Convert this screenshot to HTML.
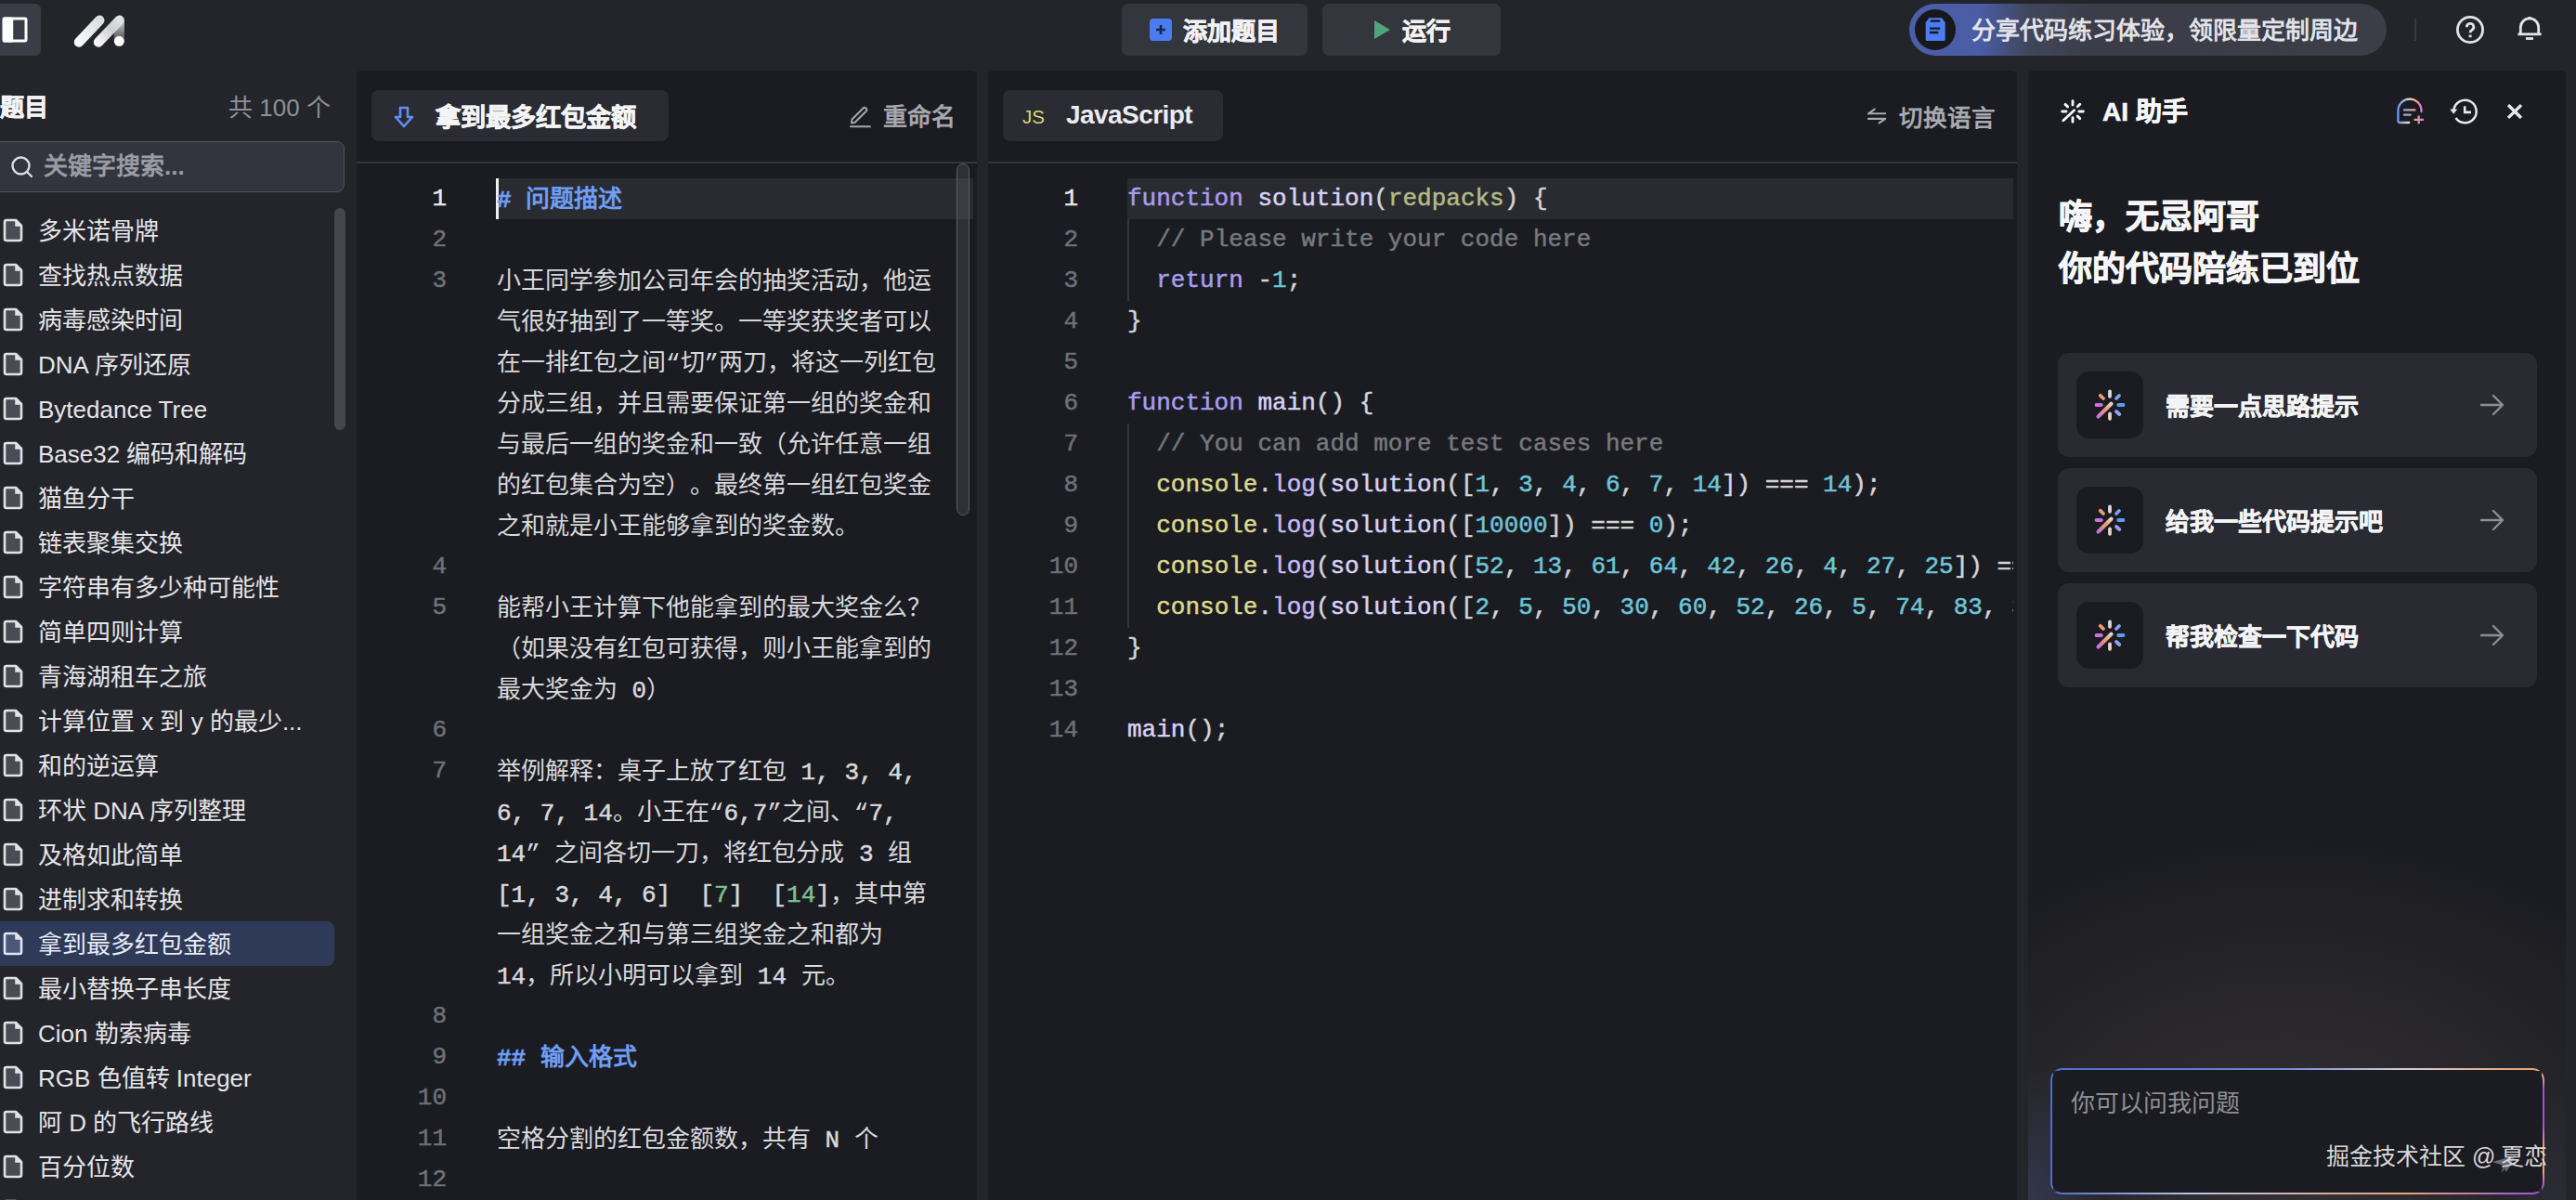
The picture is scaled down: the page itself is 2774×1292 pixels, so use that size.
<!DOCTYPE html>
<html lang="zh-CN"><head><meta charset="utf-8">
<style>
*{box-sizing:border-box;margin:0;padding:0}
html,body{width:2774px;height:1292px;overflow:hidden}
body{text-spacing-trim:space-all;background:#24252b;font-family:"Liberation Sans",sans-serif;color:#e6e6ea;position:relative}
.a{position:absolute;white-space:nowrap}
.b{font-weight:bold}.hv{-webkit-text-stroke:0.6px currentColor}.as{-webkit-text-stroke:0.5px currentColor}
/* top bar */
.tbtn{position:absolute;top:4px;height:56px;background:#34363e;border-radius:7px}
/* sidebar */
.item{position:absolute;left:0;width:360px;height:48px;font-size:26px;line-height:48px;color:#e4e4e8}
.item .ic{position:absolute;left:3px;top:11px;width:22px;height:26px}
.item span{position:absolute;left:41px;top:1px}
.item.sel .ic path{stroke:#dfe5f2}.item.sel .ic path:first-child{fill:#4b5678}.item.sel span{color:#e8ecf6}.item.sel{background:#2e3a58;border-radius:0 8px 8px 0}
/* panels */
.panel{position:absolute;top:76px;height:1240px;background:#1b1c21;border-radius:5px 5px 0 0;overflow:hidden}
.sep{position:absolute;left:0;right:0;top:98px;height:2px;background:#35363c}
.chip{position:absolute;top:21px;height:55px;background:#2b2c33;border-radius:8px}
.ln{position:absolute;text-align:right;font-family:"Liberation Mono",monospace;font-size:26px;line-height:44px;color:#6f7077;-webkit-text-stroke:0.5px currentColor}
.md{position:absolute;margin-top:2px;font-size:26px;line-height:44px;color:#d8d8dc;font-family:"Liberation Mono",monospace}
.code{position:absolute;font-family:"Liberation Mono",monospace;font-size:26px;line-height:44px;color:#d4d4d8;white-space:pre;-webkit-text-stroke:0.5px currentColor}
.kw{color:#a99cf0}.fn{color:#d8d2f8}.pa{color:#b3bb86}.cm{color:#77787e}.nu{color:#6ec5d8}.co{color:#dcd88e}.lg{color:#c6b9f6}.gr{color:#7fc08f}
.card{position:absolute;left:2216px;width:516px;height:112px;background:#2a2b32;border-radius:12px}
.card .ib{position:absolute;left:20px;top:20px;width:72px;height:72px;background:#1b1c21;border-radius:14px}
.card .t{position:absolute;left:116px;top:0;line-height:112px;font-size:26px;font-weight:bold;color:#f0f0f2}
.card .ar{position:absolute;left:455px;top:43px}
</style></head>
<body>

<!-- ===== TOP BAR ===== -->
<div class="a" style="left:0;top:4px;width:44px;height:56px;background:#3a3c46;border-radius:0 6px 6px 0"></div>
<svg class="a" style="left:0;top:0" width="44" height="60" viewBox="0 0 44 60"><rect x="4.2" y="19.9" width="23.8" height="24.1" rx="1.2" fill="none" stroke="#fff" stroke-width="3"/><rect x="2.7" y="18.4" width="11.5" height="27.1" rx="1.5" fill="#fff"/></svg>
<!-- logo -->
<svg class="a" style="left:78px;top:14.7px" width="60" height="38" viewBox="0 0 60 38">
<defs><linearGradient id="lg1" x1="0" y1="1" x2="1" y2="0"><stop offset="0" stop-color="#f8f8f8"/><stop offset="1" stop-color="#dedede"/></linearGradient>
<linearGradient id="lg2" x1="0" y1="1" x2="1" y2="0"><stop offset="0" stop-color="#f4f4f4"/><stop offset="0.6" stop-color="#cfcfcf"/><stop offset="1" stop-color="#e0e0e0"/></linearGradient>
<linearGradient id="lg3" x1="0" y1="0" x2="0" y2="1"><stop offset="0" stop-color="#cfcfcf"/><stop offset="1" stop-color="#4a4a4e"/></linearGradient></defs>
<path d="M55.85 6.8V29.3H44.8V19z" fill="url(#lg3)"/>
<line x1="7" y1="30.4" x2="29.2" y2="6.8" stroke="url(#lg1)" stroke-width="10.6" stroke-linecap="round"/>
<line x1="28.1" y1="30.4" x2="50.6" y2="6.8" stroke="url(#lg2)" stroke-width="10.6" stroke-linecap="round"/>
<circle cx="50.3" cy="29.3" r="5.5" fill="#fff"/>
</svg>

<div class="tbtn" style="left:1208px;width:200px"></div>
<svg class="a" style="left:1238px;top:20px" width="24" height="24" viewBox="0 0 24 24"><rect x="0" y="0" width="24" height="24" rx="4" fill="#4a7cf0"/><path d="M12 7v10M7 12h10" stroke="#15254f" stroke-width="2.6"/></svg>
<div class="a b hv" style="left:1274px;top:6px;line-height:56px;font-size:26px;color:#f2f2f4">添加题目</div>
<div class="tbtn" style="left:1424px;width:192px"></div>
<svg class="a" style="left:1480px;top:22px" width="17" height="20" viewBox="0 0 17 20"><path d="M0 0L17 10L0 20Z" fill="#4fa47e"/></svg>
<div class="a b hv" style="left:1510px;top:6px;line-height:56px;font-size:26px;color:#f2f2f4">运行</div>

<div class="a" style="left:2056px;top:4px;width:514px;height:56px;border-radius:28px;background:linear-gradient(90deg,#4b5ea8 0%,#4a5ca3 15%,#40465c 25%,#3b3d48 38%,#3b3d47 100%)"></div>
<div class="a" style="left:2062px;top:10px;width:44px;height:44px;border-radius:22px;background:#17181c"></div>
<svg class="a" style="left:2066px;top:14px" width="36" height="36" viewBox="2066 14 36 36"><path d="M2073.7 42.4V24.2L2077.4 19.2H2091L2094.7 24.2V42.4a1.5 1.5 0 0 1-1.5 1.5H2075.2a1.5 1.5 0 0 1-1.5-1.5z" fill="#4a7cf2"/><path d="M2078.8 22.6H2089.2M2078 30.6H2089.2M2078 35H2087.4" stroke="#17181c" stroke-width="2.3"/></svg>
<div class="a" style="left:2123px;top:5px;line-height:56px;font-size:26px;color:#e2e2e8;font-weight:bold">分享代码练习体验，领限量定制周边</div>
<div class="a" style="left:2600px;top:20px;width:2px;height:24px;background:#3a3b42"></div>
<svg class="a" style="left:2644px;top:16px" width="32" height="32" viewBox="0 0 32 32"><circle cx="16" cy="16" r="13.6" fill="none" stroke="#e4e4e8" stroke-width="2.8"/><path d="M12.4 13.2a3.7 3.7 0 1 1 5.6 3.1c-1.2.7-1.9 1.5-1.9 3" fill="none" stroke="#e4e4e8" stroke-width="2.8" stroke-linecap="butt"/><rect x="14.6" y="21.6" width="3" height="2.6" fill="#e4e4e8"/></svg>
<svg class="a" style="left:2709px;top:15px" width="30" height="32" viewBox="0 0 30 32"><path d="M5.3 21V14.5a9.7 9.7 0 0 1 19.4 0V21" fill="none" stroke="#e4e4e8" stroke-width="2.8"/><path d="M2.4 21.8h25.2" stroke="#e4e4e8" stroke-width="2.8"/><path d="M11 26.5h8" stroke="#e4e4e8" stroke-width="2.8"/><rect x="13.3" y="3" width="3.4" height="2.5" fill="#e4e4e8"/></svg>

<!-- ===== SIDEBAR ===== -->
<div class="a b hv" style="left:0;top:94px;line-height:44px;font-size:26px;color:#f4f4f6">题目</div>
<div class="a" style="left:246px;top:94px;line-height:44px;font-size:26px;color:#8e9099">共 100 个</div>
<div class="a" style="left:-10px;top:152px;width:381px;height:55px;background:#32353d;border:1.5px solid #52555e;border-radius:8px"></div>
<svg class="a" style="left:12px;top:168px" width="24" height="24" viewBox="0 0 24 24"><circle cx="10.5" cy="10.5" r="9" fill="none" stroke="#dcdce0" stroke-width="2.4"/><path d="M17.5 17.5L22 22" stroke="#dcdce0" stroke-width="2.4" stroke-linecap="round"/></svg>
<div class="a b" style="left:47px;top:152px;line-height:55px;font-size:26px;color:#9a9ca5">关键字搜索...</div>
<div class="a" style="left:360px;top:224px;width:12px;height:239px;background:#46474c;border-radius:6px"></div>

<div id="list">
<div class="item" style="top:224px"><svg class="ic" viewBox="0 0 22 26"><path d="M4 2h10l6 6v14a2 2 0 0 1-2 2H4a2 2 0 0 1-2-2V4a2 2 0 0 1 2-2z" fill="#4a4b55" stroke="#e2e2e6" stroke-width="2.6" stroke-linejoin="round"/><path d="M14 2v6h6" fill="#e2e2e6" stroke="#e2e2e6" stroke-width="1.5"/></svg><span>多米诺骨牌</span></div>
<div class="item" style="top:272px"><svg class="ic" viewBox="0 0 22 26"><path d="M4 2h10l6 6v14a2 2 0 0 1-2 2H4a2 2 0 0 1-2-2V4a2 2 0 0 1 2-2z" fill="#4a4b55" stroke="#e2e2e6" stroke-width="2.6" stroke-linejoin="round"/><path d="M14 2v6h6" fill="#e2e2e6" stroke="#e2e2e6" stroke-width="1.5"/></svg><span>查找热点数据</span></div>
<div class="item" style="top:320px"><svg class="ic" viewBox="0 0 22 26"><path d="M4 2h10l6 6v14a2 2 0 0 1-2 2H4a2 2 0 0 1-2-2V4a2 2 0 0 1 2-2z" fill="#4a4b55" stroke="#e2e2e6" stroke-width="2.6" stroke-linejoin="round"/><path d="M14 2v6h6" fill="#e2e2e6" stroke="#e2e2e6" stroke-width="1.5"/></svg><span>病毒感染时间</span></div>
<div class="item" style="top:368px"><svg class="ic" viewBox="0 0 22 26"><path d="M4 2h10l6 6v14a2 2 0 0 1-2 2H4a2 2 0 0 1-2-2V4a2 2 0 0 1 2-2z" fill="#4a4b55" stroke="#e2e2e6" stroke-width="2.6" stroke-linejoin="round"/><path d="M14 2v6h6" fill="#e2e2e6" stroke="#e2e2e6" stroke-width="1.5"/></svg><span>DNA 序列还原</span></div>
<div class="item" style="top:416px"><svg class="ic" viewBox="0 0 22 26"><path d="M4 2h10l6 6v14a2 2 0 0 1-2 2H4a2 2 0 0 1-2-2V4a2 2 0 0 1 2-2z" fill="#4a4b55" stroke="#e2e2e6" stroke-width="2.6" stroke-linejoin="round"/><path d="M14 2v6h6" fill="#e2e2e6" stroke="#e2e2e6" stroke-width="1.5"/></svg><span>Bytedance Tree</span></div>
<div class="item" style="top:464px"><svg class="ic" viewBox="0 0 22 26"><path d="M4 2h10l6 6v14a2 2 0 0 1-2 2H4a2 2 0 0 1-2-2V4a2 2 0 0 1 2-2z" fill="#4a4b55" stroke="#e2e2e6" stroke-width="2.6" stroke-linejoin="round"/><path d="M14 2v6h6" fill="#e2e2e6" stroke="#e2e2e6" stroke-width="1.5"/></svg><span>Base32 编码和解码</span></div>
<div class="item" style="top:512px"><svg class="ic" viewBox="0 0 22 26"><path d="M4 2h10l6 6v14a2 2 0 0 1-2 2H4a2 2 0 0 1-2-2V4a2 2 0 0 1 2-2z" fill="#4a4b55" stroke="#e2e2e6" stroke-width="2.6" stroke-linejoin="round"/><path d="M14 2v6h6" fill="#e2e2e6" stroke="#e2e2e6" stroke-width="1.5"/></svg><span>猫鱼分干</span></div>
<div class="item" style="top:560px"><svg class="ic" viewBox="0 0 22 26"><path d="M4 2h10l6 6v14a2 2 0 0 1-2 2H4a2 2 0 0 1-2-2V4a2 2 0 0 1 2-2z" fill="#4a4b55" stroke="#e2e2e6" stroke-width="2.6" stroke-linejoin="round"/><path d="M14 2v6h6" fill="#e2e2e6" stroke="#e2e2e6" stroke-width="1.5"/></svg><span>链表聚集交换</span></div>
<div class="item" style="top:608px"><svg class="ic" viewBox="0 0 22 26"><path d="M4 2h10l6 6v14a2 2 0 0 1-2 2H4a2 2 0 0 1-2-2V4a2 2 0 0 1 2-2z" fill="#4a4b55" stroke="#e2e2e6" stroke-width="2.6" stroke-linejoin="round"/><path d="M14 2v6h6" fill="#e2e2e6" stroke="#e2e2e6" stroke-width="1.5"/></svg><span>字符串有多少种可能性</span></div>
<div class="item" style="top:656px"><svg class="ic" viewBox="0 0 22 26"><path d="M4 2h10l6 6v14a2 2 0 0 1-2 2H4a2 2 0 0 1-2-2V4a2 2 0 0 1 2-2z" fill="#4a4b55" stroke="#e2e2e6" stroke-width="2.6" stroke-linejoin="round"/><path d="M14 2v6h6" fill="#e2e2e6" stroke="#e2e2e6" stroke-width="1.5"/></svg><span>简单四则计算</span></div>
<div class="item" style="top:704px"><svg class="ic" viewBox="0 0 22 26"><path d="M4 2h10l6 6v14a2 2 0 0 1-2 2H4a2 2 0 0 1-2-2V4a2 2 0 0 1 2-2z" fill="#4a4b55" stroke="#e2e2e6" stroke-width="2.6" stroke-linejoin="round"/><path d="M14 2v6h6" fill="#e2e2e6" stroke="#e2e2e6" stroke-width="1.5"/></svg><span>青海湖租车之旅</span></div>
<div class="item" style="top:752px"><svg class="ic" viewBox="0 0 22 26"><path d="M4 2h10l6 6v14a2 2 0 0 1-2 2H4a2 2 0 0 1-2-2V4a2 2 0 0 1 2-2z" fill="#4a4b55" stroke="#e2e2e6" stroke-width="2.6" stroke-linejoin="round"/><path d="M14 2v6h6" fill="#e2e2e6" stroke="#e2e2e6" stroke-width="1.5"/></svg><span>计算位置 x 到 y 的最少...</span></div>
<div class="item" style="top:800px"><svg class="ic" viewBox="0 0 22 26"><path d="M4 2h10l6 6v14a2 2 0 0 1-2 2H4a2 2 0 0 1-2-2V4a2 2 0 0 1 2-2z" fill="#4a4b55" stroke="#e2e2e6" stroke-width="2.6" stroke-linejoin="round"/><path d="M14 2v6h6" fill="#e2e2e6" stroke="#e2e2e6" stroke-width="1.5"/></svg><span>和的逆运算</span></div>
<div class="item" style="top:848px"><svg class="ic" viewBox="0 0 22 26"><path d="M4 2h10l6 6v14a2 2 0 0 1-2 2H4a2 2 0 0 1-2-2V4a2 2 0 0 1 2-2z" fill="#4a4b55" stroke="#e2e2e6" stroke-width="2.6" stroke-linejoin="round"/><path d="M14 2v6h6" fill="#e2e2e6" stroke="#e2e2e6" stroke-width="1.5"/></svg><span>环状 DNA 序列整理</span></div>
<div class="item" style="top:896px"><svg class="ic" viewBox="0 0 22 26"><path d="M4 2h10l6 6v14a2 2 0 0 1-2 2H4a2 2 0 0 1-2-2V4a2 2 0 0 1 2-2z" fill="#4a4b55" stroke="#e2e2e6" stroke-width="2.6" stroke-linejoin="round"/><path d="M14 2v6h6" fill="#e2e2e6" stroke="#e2e2e6" stroke-width="1.5"/></svg><span>及格如此简单</span></div>
<div class="item" style="top:944px"><svg class="ic" viewBox="0 0 22 26"><path d="M4 2h10l6 6v14a2 2 0 0 1-2 2H4a2 2 0 0 1-2-2V4a2 2 0 0 1 2-2z" fill="#4a4b55" stroke="#e2e2e6" stroke-width="2.6" stroke-linejoin="round"/><path d="M14 2v6h6" fill="#e2e2e6" stroke="#e2e2e6" stroke-width="1.5"/></svg><span>进制求和转换</span></div>
<div class="item sel" style="top:992px"><svg class="ic" viewBox="0 0 22 26"><path d="M4 2h10l6 6v14a2 2 0 0 1-2 2H4a2 2 0 0 1-2-2V4a2 2 0 0 1 2-2z" fill="#4a4b55" stroke="#e2e2e6" stroke-width="2.6" stroke-linejoin="round"/><path d="M14 2v6h6" fill="#e2e2e6" stroke="#e2e2e6" stroke-width="1.5"/></svg><span>拿到最多红包金额</span></div>
<div class="item" style="top:1040px"><svg class="ic" viewBox="0 0 22 26"><path d="M4 2h10l6 6v14a2 2 0 0 1-2 2H4a2 2 0 0 1-2-2V4a2 2 0 0 1 2-2z" fill="#4a4b55" stroke="#e2e2e6" stroke-width="2.6" stroke-linejoin="round"/><path d="M14 2v6h6" fill="#e2e2e6" stroke="#e2e2e6" stroke-width="1.5"/></svg><span>最小替换子串长度</span></div>
<div class="item" style="top:1088px"><svg class="ic" viewBox="0 0 22 26"><path d="M4 2h10l6 6v14a2 2 0 0 1-2 2H4a2 2 0 0 1-2-2V4a2 2 0 0 1 2-2z" fill="#4a4b55" stroke="#e2e2e6" stroke-width="2.6" stroke-linejoin="round"/><path d="M14 2v6h6" fill="#e2e2e6" stroke="#e2e2e6" stroke-width="1.5"/></svg><span>Cion 勒索病毒</span></div>
<div class="item" style="top:1136px"><svg class="ic" viewBox="0 0 22 26"><path d="M4 2h10l6 6v14a2 2 0 0 1-2 2H4a2 2 0 0 1-2-2V4a2 2 0 0 1 2-2z" fill="#4a4b55" stroke="#e2e2e6" stroke-width="2.6" stroke-linejoin="round"/><path d="M14 2v6h6" fill="#e2e2e6" stroke="#e2e2e6" stroke-width="1.5"/></svg><span>RGB 色值转 Integer</span></div>
<div class="item" style="top:1184px"><svg class="ic" viewBox="0 0 22 26"><path d="M4 2h10l6 6v14a2 2 0 0 1-2 2H4a2 2 0 0 1-2-2V4a2 2 0 0 1 2-2z" fill="#4a4b55" stroke="#e2e2e6" stroke-width="2.6" stroke-linejoin="round"/><path d="M14 2v6h6" fill="#e2e2e6" stroke="#e2e2e6" stroke-width="1.5"/></svg><span>阿 D 的飞行路线</span></div>
<div class="item" style="top:1232px"><svg class="ic" viewBox="0 0 22 26"><path d="M4 2h10l6 6v14a2 2 0 0 1-2 2H4a2 2 0 0 1-2-2V4a2 2 0 0 1 2-2z" fill="#4a4b55" stroke="#e2e2e6" stroke-width="2.6" stroke-linejoin="round"/><path d="M14 2v6h6" fill="#e2e2e6" stroke="#e2e2e6" stroke-width="1.5"/></svg><span>百分位数</span></div>
<div class="item" style="top:1280px"><svg class="ic" viewBox="0 0 22 26"><path d="M4 2h10l6 6v14a2 2 0 0 1-2 2H4a2 2 0 0 1-2-2V4a2 2 0 0 1 2-2z" fill="#4a4b55" stroke="#e2e2e6" stroke-width="2.6" stroke-linejoin="round"/><path d="M14 2v6h6" fill="#e2e2e6" stroke="#e2e2e6" stroke-width="1.5"/></svg></div>
</div>

<!-- ===== PANEL 1: problem ===== -->
<div class="panel" style="left:384px;width:668px" id="p1">
<div class="chip" style="left:16px;width:320px"></div>
<svg class="a" style="left:40px;top:38px" width="22" height="24" viewBox="0 0 22 24"><path d="M7 2h8v10h5L11 22 2 12h5z" fill="none" stroke="#5f8ff0" stroke-width="2.6" stroke-linejoin="round"/></svg>
<div class="a b hv" style="left:85px;top:23px;line-height:55px;font-size:27.3px;color:#f4f4f6">拿到最多红包金额</div>
<svg class="a" style="left:530px;top:37px" width="26" height="25" viewBox="0 0 26 25"><path d="M3 19.5L3.5 15.5L15.5 3.5a2.2 2.2 0 0 1 3 0l0.2 0.2a2.2 2.2 0 0 1 0 3L6.7 18.8z" fill="none" stroke="#a6a7ad" stroke-width="2" stroke-linejoin="round"/><path d="M2 23.2h21" stroke="#a6a7ad" stroke-width="2" stroke-linecap="round"/></svg>
<div class="a b" style="left:567px;top:23px;line-height:55px;font-size:26px;color:#a6a7ad">重命名</div>
<div class="sep"></div>
<div class="a" style="left:150px;top:116px;width:514px;height:44px;background:#2a2b31"></div>
<div class="a" style="left:150px;top:116px;width:3px;height:44px;background:#f0f0f0"></div>
<div class="a" style="left:646px;top:100px;width:14px;height:379px;background:rgba(120,120,130,0.22);border:1.6px solid #5c5d63;border-radius:7px"></div>
<div class="ln" style="left:37px;width:60px;top:116px;color:#e8e8ec">1</div>
<div class="ln" style="left:37px;width:60px;top:160px;color:#6f7077">2</div>
<div class="ln" style="left:37px;width:60px;top:204px;color:#6f7077">3</div>
<div class="ln" style="left:37px;width:60px;top:512px;color:#6f7077">4</div>
<div class="ln" style="left:37px;width:60px;top:556px;color:#6f7077">5</div>
<div class="ln" style="left:37px;width:60px;top:688px;color:#6f7077">6</div>
<div class="ln" style="left:37px;width:60px;top:732px;color:#6f7077">7</div>
<div class="ln" style="left:37px;width:60px;top:996px;color:#6f7077">8</div>
<div class="ln" style="left:37px;width:60px;top:1040px;color:#6f7077">9</div>
<div class="ln" style="left:37px;width:60px;top:1084px;color:#6f7077">10</div>
<div class="ln" style="left:37px;width:60px;top:1128px;color:#6f7077">11</div>
<div class="ln" style="left:37px;width:60px;top:1172px;color:#6f7077">12</div>
<div class="ln" style="left:37px;width:60px;top:1216px;color:#6f7077">13</div>
<div class="md" style="left:151px;top:116px;white-space:pre"><span style="color:#6e9ef5;font-weight:bold"><span class="as">#</span> 问题描述</span></div>
<div class="md" style="left:151px;top:204px;white-space:pre">小王同学参加公司年会的抽奖活动，他运</div>
<div class="md" style="left:151px;top:248px;white-space:pre">气很好抽到了一等奖。一等奖获奖者可以</div>
<div class="md" style="left:151px;top:292px;white-space:pre">在一排红包之间“切”两刀，将这一列红包</div>
<div class="md" style="left:151px;top:336px;white-space:pre">分成三组，并且需要保证第一组的奖金和</div>
<div class="md" style="left:151px;top:380px;white-space:pre">与最后一组的奖金和一致（允许任意一组</div>
<div class="md" style="left:151px;top:424px;white-space:pre">的红包集合为空）。最终第一组红包奖金</div>
<div class="md" style="left:151px;top:468px;white-space:pre">之和就是小王能够拿到的奖金数。</div>
<div class="md" style="left:151px;top:556px;white-space:pre">能帮小王计算下他能拿到的最大奖金么？</div>
<div class="md" style="left:151px;top:600px;white-space:pre">（如果没有红包可获得，则小王能拿到的</div>
<div class="md" style="left:151px;top:644px;white-space:pre">最大奖金为 <span class="as">0</span>）</div>
<div class="md" style="left:151px;top:732px;white-space:pre">举例解释：桌子上放了红包 <span class="as">1, 3, 4,</span></div>
<div class="md" style="left:151px;top:776px;white-space:pre"><span class="as">6, 7, 14</span>。小王在“<span class="as">6,7</span>”之间、“<span class="as">7,</span></div>
<div class="md" style="left:151px;top:820px;white-space:pre"><span class="as">14</span>” 之间各切一刀，将红包分成 <span class="as">3</span> 组</div>
<div class="md" style="left:151px;top:864px;white-space:pre"><span class="as">[1, 3, 4, 6]  [</span><span class="gr"><span class="as">7</span></span><span class="as">]  [</span><span class="gr"><span class="as">14</span></span><span class="as">]</span>，其中第</div>
<div class="md" style="left:151px;top:908px;white-space:pre">一组奖金之和与第三组奖金之和都为</div>
<div class="md" style="left:151px;top:952px;white-space:pre"><span class="as">14</span>，所以小明可以拿到 <span class="as">14</span> 元。</div>
<div class="md" style="left:151px;top:1040px;white-space:pre"><span style="color:#6e9ef5;font-weight:bold"><span class="as">##</span> 输入格式</span></div>
<div class="md" style="left:151px;top:1128px;white-space:pre">空格分割的红包金额数，共有 <span class="as">N</span> 个</div>
</div>

<!-- ===== PANEL 2: code ===== -->
<div class="panel" style="left:1064px;width:1108px" id="p2">
<div class="chip" style="left:16px;width:237px"></div>
<div class="a" style="left:37px;top:22px;line-height:55px;font-size:20.5px;color:#d6d66e">JS</div>
<div class="a b" style="left:84px;top:20px;line-height:55px;font-size:28px;letter-spacing:-0.55px;color:#ececf0">JavaScript</div>
<svg class="a" style="left:940px;top:36px" width="34" height="26" viewBox="940 36 34 26"><path d="M948 46.3H966.2M948 46.3L954.7 41.7M948 51.9H966.2M966.2 51.9L959.6 56.4" fill="none" stroke="#a8aab2" stroke-width="2.1" stroke-linecap="round" stroke-linejoin="round"/></svg>
<div class="a b" style="left:981px;top:23.5px;line-height:55px;font-size:25.5px;color:#a8aab2">切换语言</div>
<div class="sep"></div>
<div class="a" style="left:150px;top:116px;width:954px;height:44px;background:#2a2b31"></div>
<div class="a" style="left:150px;top:160px;width:1.5px;height:88px;background:#35363c"></div>
<div class="a" style="left:150px;top:380px;width:1.5px;height:220px;background:#35363c"></div>
<div class="ln" style="left:37px;width:60px;top:116px;color:#e8e8ec">1</div>
<div class="ln" style="left:37px;width:60px;top:160px;color:#6f7077">2</div>
<div class="ln" style="left:37px;width:60px;top:204px;color:#6f7077">3</div>
<div class="ln" style="left:37px;width:60px;top:248px;color:#6f7077">4</div>
<div class="ln" style="left:37px;width:60px;top:292px;color:#6f7077">5</div>
<div class="ln" style="left:37px;width:60px;top:336px;color:#6f7077">6</div>
<div class="ln" style="left:37px;width:60px;top:380px;color:#6f7077">7</div>
<div class="ln" style="left:37px;width:60px;top:424px;color:#6f7077">8</div>
<div class="ln" style="left:37px;width:60px;top:468px;color:#6f7077">9</div>
<div class="ln" style="left:37px;width:60px;top:512px;color:#6f7077">10</div>
<div class="ln" style="left:37px;width:60px;top:556px;color:#6f7077">11</div>
<div class="ln" style="left:37px;width:60px;top:600px;color:#6f7077">12</div>
<div class="ln" style="left:37px;width:60px;top:644px;color:#6f7077">13</div>
<div class="ln" style="left:37px;width:60px;top:688px;color:#6f7077">14</div>
<div class="a" style="left:150px;top:0;width:954px;height:1240px;overflow:hidden"><div class="code" style="left:0;top:116px"><span class="kw">function</span> <span class="fn">solution</span>(<span class="pa">redpacks</span>) {</div>
<div class="code" style="left:0;top:160px">  <span class="cm">// Please write your code here</span></div>
<div class="code" style="left:0;top:204px">  <span class="kw">return</span> -<span class="nu">1</span>;</div>
<div class="code" style="left:0;top:248px">}</div>
<div class="code" style="left:0;top:292px"></div>
<div class="code" style="left:0;top:336px"><span class="kw">function</span> <span class="fn">main</span>() {</div>
<div class="code" style="left:0;top:380px">  <span class="cm">// You can add more test cases here</span></div>
<div class="code" style="left:0;top:424px">  <span class="co">console</span>.<span class="lg">log</span>(<span class="fn">solution</span>([<span class="nu">1</span>, <span class="nu">3</span>, <span class="nu">4</span>, <span class="nu">6</span>, <span class="nu">7</span>, <span class="nu">14</span>]) === <span class="nu">14</span>);</div>
<div class="code" style="left:0;top:468px">  <span class="co">console</span>.<span class="lg">log</span>(<span class="fn">solution</span>([<span class="nu">10000</span>]) === <span class="nu">0</span>);</div>
<div class="code" style="left:0;top:512px">  <span class="co">console</span>.<span class="lg">log</span>(<span class="fn">solution</span>([<span class="nu">52</span>, <span class="nu">13</span>, <span class="nu">61</span>, <span class="nu">64</span>, <span class="nu">42</span>, <span class="nu">26</span>, <span class="nu">4</span>, <span class="nu">27</span>, <span class="nu">25</span>]) === <span class="nu">33</span>);</div>
<div class="code" style="left:0;top:556px">  <span class="co">console</span>.<span class="lg">log</span>(<span class="fn">solution</span>([<span class="nu">2</span>, <span class="nu">5</span>, <span class="nu">50</span>, <span class="nu">30</span>, <span class="nu">60</span>, <span class="nu">52</span>, <span class="nu">26</span>, <span class="nu">5</span>, <span class="nu">74</span>, <span class="nu">83</span>, <span class="nu">34</span>, <span class="nu">96</span>, <span class="nu">6</span>, <span class="nu">88</span>, <span class="nu">94</span>, <span class="nu">80</span>, <span class="nu">64</span>, <span class="nu">22</span>]) === <span class="nu">2627</span>);</div>
<div class="code" style="left:0;top:600px">}</div>
<div class="code" style="left:0;top:644px"></div>
<div class="code" style="left:0;top:688px"><span class="fn">main</span>();</div></div>
</div>

<!-- ===== PANEL 3: AI ===== -->
<div class="panel" style="left:2184px;width:579px" id="p3">
<div class="a" style="left:0;top:600px;width:579px;height:640px;background:radial-gradient(ellipse 85% 55% at 48% 90%, rgba(62,56,60,0.75), rgba(62,56,60,0) 100%)"></div>
<div class="a" style="left:0;top:900px;width:579px;height:340px;background:radial-gradient(ellipse 14% 50% at 0% 100%, rgba(62,75,110,0.55), rgba(62,75,110,0) 100%)"></div>
<div class="a" style="left:0;top:900px;width:579px;height:340px;background:radial-gradient(ellipse 12% 45% at 100% 100%, rgba(60,62,80,0.35), rgba(60,62,80,0) 100%)"></div>
<svg class="a" style="left:33px;top:29px" width="30" height="30" viewBox="-15 -15 30 30"><g stroke="#f6f6f8" stroke-width="2.9" stroke-linecap="round" fill="none">
<path d="M0 -11.3V-7M0 6.6V11.3M-11.3 0H-7M6.8 0H11.3M-8 -7.6L-5.4 -5.1M5.2 -5.2L7.8 -7.7M5.2 5.1L7.8 7.6M-10.1 9.8L1.6 -1.2"/></g></svg>
<div class="a b hv" style="left:80px;top:23px;line-height:44px;font-size:28px;color:#f8f8fa">AI 助手</div>
<svg class="a" style="left:392px;top:24px" width="40" height="38" viewBox="2576 100 40 38"><defs>
<linearGradient id="ncg" gradientUnits="userSpaceOnUse" x1="2582" y1="0" x2="2608" y2="0"><stop offset="0" stop-color="#6f90f2"/><stop offset="0.5" stop-color="#eee0d6"/><stop offset="0.75" stop-color="#f0a67a"/><stop offset="1" stop-color="#d67ae6"/></linearGradient>
<linearGradient id="ncl" gradientUnits="userSpaceOnUse" x1="2589" y1="0" x2="2601" y2="0"><stop offset="0" stop-color="#8fa8f0"/><stop offset="1" stop-color="#f0a67a"/></linearGradient>
<linearGradient id="ncp" gradientUnits="userSpaceOnUse" x1="2599" y1="0" x2="2610" y2="0"><stop offset="0" stop-color="#f0a67a"/><stop offset="1" stop-color="#d07ae8"/></linearGradient></defs>
<path d="M2594.2 132H2584.4a2 2 0 0 1-2-2V119.1A12.55 12.55 0 0 1 2607.5 119.1v1.1" fill="none" stroke="url(#ncg)" stroke-width="2.3" stroke-linecap="round"/>
<path d="M2589 118.4H2600.5M2589 123.65H2595.6" stroke="url(#ncl)" stroke-width="2.3" stroke-linecap="round"/>
<path d="M2599.5 128.9H2610M2604.7 124.5V133.2" stroke="url(#ncp)" stroke-width="2.3" stroke-linecap="butt"/></svg>
<svg class="a" style="left:448px;top:24px" width="40" height="40" viewBox="2632 100 40 40">
<path d="M2642.5 117.9A12.2 12.2 0 1 1 2644.5 127" fill="none" stroke="#e8e8ec" stroke-width="2.5" stroke-linecap="butt"/>
<path d="M2638.2 117.6H2646.2L2642.2 122.8z" fill="#e8e8ec"/>
<path d="M2654.2 114.2V120.9H2661" fill="none" stroke="#e8e8ec" stroke-width="2.6"/></svg>
<svg class="a" style="left:512px;top:32px" width="24" height="24" viewBox="2696 108 24 24"><path d="M2702.2 114.3L2713.8 125.7M2713.8 114.3L2702.2 125.7" stroke="#e8e8ec" stroke-width="3.4" stroke-linecap="square"/></svg>
<div class="a b" style="left:33px;top:130px;line-height:56px;font-size:36px;color:#f6f6f8;-webkit-text-stroke:1px #f6f6f8">嗨，无忌阿哥<br>你的代码陪练已到位</div>
<div class="a" style="left:32px;top:304px;width:516px;height:112px;background:#2a2b32;border-radius:12px"><div style="position:absolute;left:20px;top:20px;width:72px;height:72px;background:#1b1c21;border-radius:14px"><svg style="position:absolute;left:0;top:0" width="72" height="72" viewBox="0 0 72 72"><defs><linearGradient id="wg" x1="22.8" y1="49.2" x2="38" y2="34" gradientUnits="userSpaceOnUse"><stop offset="0" stop-color="#c56be8"/><stop offset="0.55" stop-color="#eb9a72"/><stop offset="1" stop-color="#ecd6cc"/></linearGradient></defs><g stroke-linecap="round" stroke-width="3.8" fill="none">
<path d="M36 21.5V26.8" stroke="#ddd6d8"/><path d="M36 45.5V50.8" stroke="#ead2c6"/><path d="M21.5 36H26.8" stroke="#cc70e2"/><path d="M45.2 36H50.5" stroke="#5e9cf4"/><path d="M25.8 25.8L29 29" stroke="#ec9c72"/><path d="M46 26L43 29" stroke="#7aa2f2"/><path d="M43 43L46.3 46" stroke="#8ea2f2"/><path d="M23.5 48.5L37.5 34.8" stroke="url(#wg)" stroke-width="4.2"/></g></svg></div><div class="hv" style="position:absolute;left:116px;top:2px;line-height:112px;font-size:26px;font-weight:bold;color:#f4f4f6">需要一点思路提示</div><svg style="position:absolute;left:454px;top:43px" width="28" height="26" viewBox="0 0 28 26"><path d="M2 13h23M15 3l10 10-10 10" fill="none" stroke="#8e8f96" stroke-width="2.4" stroke-linecap="round" stroke-linejoin="round"/></svg></div>
<div class="a" style="left:32px;top:428px;width:516px;height:112px;background:#2a2b32;border-radius:12px"><div style="position:absolute;left:20px;top:20px;width:72px;height:72px;background:#1b1c21;border-radius:14px"><svg style="position:absolute;left:0;top:0" width="72" height="72" viewBox="0 0 72 72"><defs><linearGradient id="wg" x1="22.8" y1="49.2" x2="38" y2="34" gradientUnits="userSpaceOnUse"><stop offset="0" stop-color="#c56be8"/><stop offset="0.55" stop-color="#eb9a72"/><stop offset="1" stop-color="#ecd6cc"/></linearGradient></defs><g stroke-linecap="round" stroke-width="3.8" fill="none">
<path d="M36 21.5V26.8" stroke="#ddd6d8"/><path d="M36 45.5V50.8" stroke="#ead2c6"/><path d="M21.5 36H26.8" stroke="#cc70e2"/><path d="M45.2 36H50.5" stroke="#5e9cf4"/><path d="M25.8 25.8L29 29" stroke="#ec9c72"/><path d="M46 26L43 29" stroke="#7aa2f2"/><path d="M43 43L46.3 46" stroke="#8ea2f2"/><path d="M23.5 48.5L37.5 34.8" stroke="url(#wg)" stroke-width="4.2"/></g></svg></div><div class="hv" style="position:absolute;left:116px;top:2px;line-height:112px;font-size:26px;font-weight:bold;color:#f4f4f6">给我一些代码提示吧</div><svg style="position:absolute;left:454px;top:43px" width="28" height="26" viewBox="0 0 28 26"><path d="M2 13h23M15 3l10 10-10 10" fill="none" stroke="#8e8f96" stroke-width="2.4" stroke-linecap="round" stroke-linejoin="round"/></svg></div>
<div class="a" style="left:32px;top:552px;width:516px;height:112px;background:#2a2b32;border-radius:12px"><div style="position:absolute;left:20px;top:20px;width:72px;height:72px;background:#1b1c21;border-radius:14px"><svg style="position:absolute;left:0;top:0" width="72" height="72" viewBox="0 0 72 72"><defs><linearGradient id="wg" x1="22.8" y1="49.2" x2="38" y2="34" gradientUnits="userSpaceOnUse"><stop offset="0" stop-color="#c56be8"/><stop offset="0.55" stop-color="#eb9a72"/><stop offset="1" stop-color="#ecd6cc"/></linearGradient></defs><g stroke-linecap="round" stroke-width="3.8" fill="none">
<path d="M36 21.5V26.8" stroke="#ddd6d8"/><path d="M36 45.5V50.8" stroke="#ead2c6"/><path d="M21.5 36H26.8" stroke="#cc70e2"/><path d="M45.2 36H50.5" stroke="#5e9cf4"/><path d="M25.8 25.8L29 29" stroke="#ec9c72"/><path d="M46 26L43 29" stroke="#7aa2f2"/><path d="M43 43L46.3 46" stroke="#8ea2f2"/><path d="M23.5 48.5L37.5 34.8" stroke="url(#wg)" stroke-width="4.2"/></g></svg></div><div class="hv" style="position:absolute;left:116px;top:2px;line-height:112px;font-size:26px;font-weight:bold;color:#f4f4f6">帮我检查一下代码</div><svg style="position:absolute;left:454px;top:43px" width="28" height="26" viewBox="0 0 28 26"><path d="M2 13h23M15 3l10 10-10 10" fill="none" stroke="#8e8f96" stroke-width="2.4" stroke-linecap="round" stroke-linejoin="round"/></svg></div>
<div class="a" style="left:24px;top:1074px;width:532px;height:136px;border-radius:13px;padding:2px;background:linear-gradient(90deg,#4f6ec4 0%,#6a84d2 45%,#d2ccd4 72%,#e6a47c 94%,#e6a47c 100%) top/100% 3px no-repeat,linear-gradient(90deg,#4f6ec4 0%,#b8c0e2 28%,#e6a47c 72%,#9a50e0 100%) bottom/100% 3px no-repeat,linear-gradient(180deg,#e6a47c 0%,#e6a47c 8%,#9a50e0 16%,#9a50e0 45%,#e2a080 62%,#e6a47c 82%,#9a50e0 94%) right/3px 100% no-repeat,linear-gradient(#4f6ec4,#4f6ec4) left/3px 100% no-repeat"><div style="width:100%;height:100%;border-radius:11px;background:#1b1c21"></div></div>
<div class="a" style="left:46px;top:1082px;line-height:60px;font-size:26px;color:#8e8f96">你可以问我问题</div>
<svg class="a" style="left:499px;top:1166px" width="28" height="24" viewBox="0 0 28 24"><path d="M1 9L26 2 16 20 13 13z" fill="#6a6b72"/><path d="M13 13L10 21 16 16z" fill="#55565c"/></svg><div class="a" style="left:321px;top:1139px;line-height:60px;font-size:25px;color:#d8d8dc">掘金技术社区 @<span style="letter-spacing:-1px"> </span>夏恋</div>
</div>

</body></html>
